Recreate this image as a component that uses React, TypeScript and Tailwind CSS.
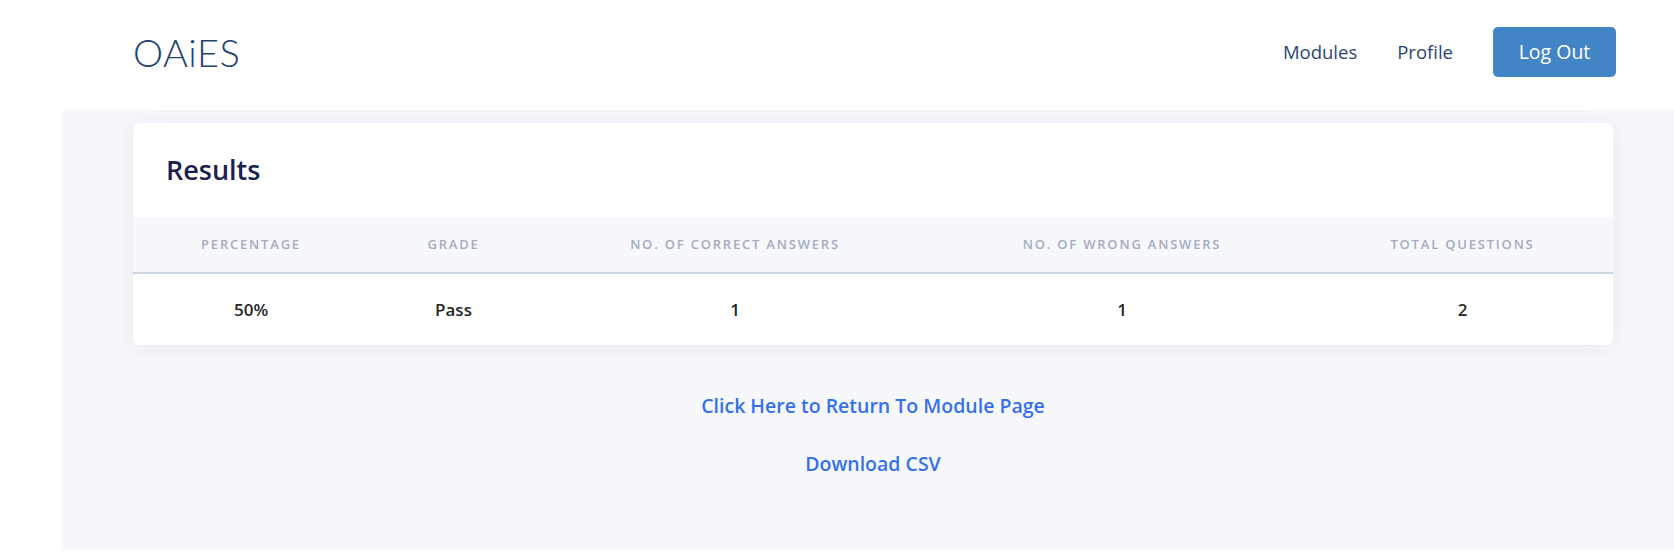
import { Fragment } from 'react';

const columns = [
  { label: 'Percentage', value: '50%' },
  { label: 'Grade', value: 'Pass' },
  { label: 'No. of Correct Answers', value: '1' },
  { label: 'No. of Wrong Answers', value: '1' },
  { label: 'Total Questions', value: '2' },
];

function Header() {
  return (
    <header className="h-[110px] bg-white flex items-center justify-between pl-[133px] pr-[58px] pb-[6px]">
      <div className="font-['Lato'] font-light text-[38px] leading-none text-[#23426e] tracking-[0.5px]">
        OAiES
      </div>
      <nav className="flex items-center">
        <a className="text-[18.5px] text-[#2c4870] mr-[40px]">Modules</a>
        <a className="text-[18.5px] text-[#2c4870] mr-[40px]">Profile</a>
        <button className="w-[123px] h-[50px] rounded-[5px] bg-[#4285c7] text-white text-[19.5px]">
          Log Out
        </button>
      </nav>
    </header>
  );
}

function ResultsCard() {
  return (
    <div className="bg-white rounded-[7px] shadow-[0_2px_24px_rgba(30,40,90,0.07)] overflow-hidden">
      <div className="h-[94px] flex items-center pl-[33px]">
        <h2 className="text-[27px] font-semibold text-[#1d1f4d]">Results</h2>
      </div>
      <div className="grid grid-cols-[236px_169px_394px_380px_1fr]">
        {columns.map((c) => (
          <div
            key={c.label}
            className="h-[57px] bg-[#f7f8fc] border-b-2 border-[#ccd4df] flex items-center justify-center pt-[1px] text-[13px] font-semibold uppercase tracking-[1.8px] text-[#a3adbd]"
          >
            {c.label}
          </div>
        ))}
        {columns.map((c) => (
          <Fragment key={c.label + '-v'}>
            <div className="h-[71px] flex items-center justify-center text-[17px] font-semibold text-[#262626]">
              {c.value}
            </div>
          </Fragment>
        ))}
      </div>
    </div>
  );
}

export default function App() {
  return (
    <div className="w-[1674px] h-[552px] bg-white font-['Open_Sans',sans-serif]">
      <Header />
      <main className="ml-[62px] h-[440px] bg-[#f7f8fc] pt-[13px] pl-[71px] pr-[61px]">
        <ResultsCard />
        <div className="flex flex-col items-center pt-[48px] gap-[33px]">
          <a className="text-[19.5px] font-semibold text-[#3570ec] leading-[25px]">
            Click Here to Return To Module Page
          </a>
          <a className="text-[19.5px] font-semibold text-[#3570ec] leading-[25px]">Download CSV</a>
        </div>
      </main>
    </div>
  );
}
